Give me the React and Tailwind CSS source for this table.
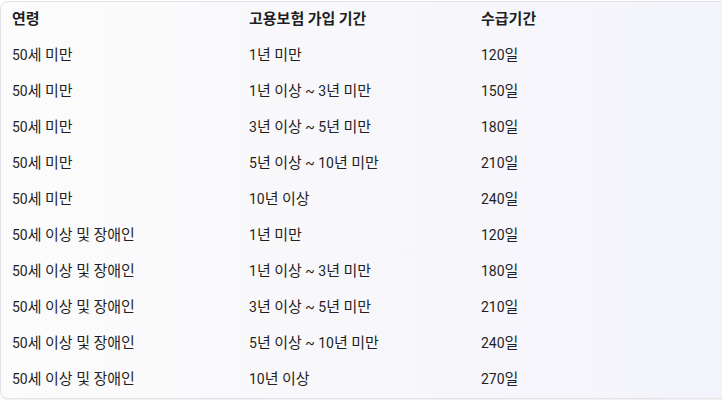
import React from "react";

const rows = [
  ["50세 미만", "1년 미만", "120일"],
  ["50세 미만", "1년 이상 ~ 3년 미만", "150일"],
  ["50세 미만", "3년 이상 ~ 5년 미만", "180일"],
  ["50세 미만", "5년 이상 ~ 10년 미만", "210일"],
  ["50세 미만", "10년 이상", "240일"],
  ["50세 이상 및 장애인", "1년 미만", "120일"],
  ["50세 이상 및 장애인", "1년 이상 ~ 3년 미만", "180일"],
  ["50세 이상 및 장애인", "3년 이상 ~ 5년 미만", "210일"],
  ["50세 이상 및 장애인", "5년 이상 ~ 10년 미만", "240일"],
  ["50세 이상 및 장애인", "10년 이상", "270일"],
];

function T({ text }) {
  const parts = text.match(/[\uAC00-\uD7A3]+|[^\uAC00-\uD7A3]+/g) || [];
  return (
    <span>
      {parts.map((p, i) =>
        /[\uAC00-\uD7A3]/.test(p) ? (
          <span key={i} className="text-[15px]">{p}</span>
        ) : (
          <span key={i}>{p}</span>
        )
      )}
    </span>
  );
}

export default function App() {
  return (
    <div
      className="w-[722px] h-[400px] overflow-hidden bg-white pt-px"
      style={{ fontFamily: 'Roboto, "Noto Sans CJK KR", sans-serif' }}
    >
      <div className="w-[740px] rounded-l-lg border border-[#e3e3e8] bg-gradient-to-r from-[#fcfcfc] to-[#f3f3fb] shadow-[0_1px_2px_rgba(0,0,0,0.08)] text-[14px] leading-[20px] text-[#1f1f1f]">
        <div className="grid grid-cols-[236px_232px_1fr] h-9 items-center font-bold pb-0.5">
          <div className="pl-[11px]"><T text="연령" /></div>
          <div className="pl-[12px]"><T text="고용보험 가입 기간" /></div>
          <div className="pl-[12px]"><T text="수급기간" /></div>
        </div>
        {rows.map((r, i) => (
          <div key={i} className="grid grid-cols-[236px_232px_1fr] h-9 items-center pb-0.5">
            <div className="pl-[11px]"><T text={r[0]} /></div>
            <div className="pl-[12px]"><T text={r[1]} /></div>
            <div className="pl-[12px]"><T text={r[2]} /></div>
          </div>
        ))}
      </div>
    </div>
  );
}
